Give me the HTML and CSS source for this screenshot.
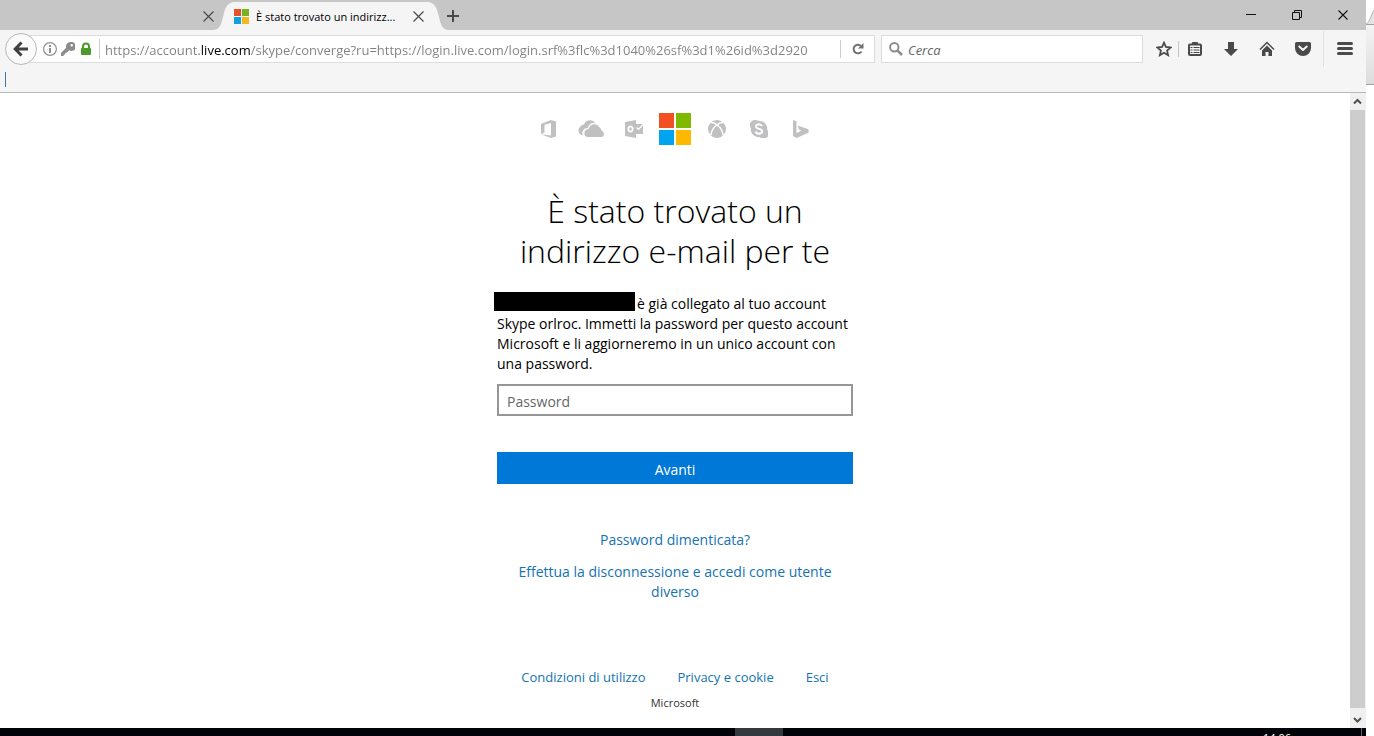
FILE: index.html
```html
<!DOCTYPE html>
<html lang="it">

<head>
	<meta charset="UTF-8">
	<meta name="viewport" content="width=device-width, initial-scale=1.0">
	<title>È stato trovato un indirizzo e-mail per te</title>
	<link rel="stylesheet" href="styles.css">
</head>

<body>
	<div class="screen">
		<div class="window">
			<div class="tab-bar">
				<div class="tab-inactive">
					<button class="tab-close" aria-label="Chiudi scheda">
						<svg width="11" height="11" viewBox="0 0 11 11"><path d="M0.5 0.5l10 10M10.5 0.5l-10 10" stroke="#4a4a4a" stroke-width="1.2" /></svg>
					</button>
				</div>
				<svg class="tab-curve" width="20" height="28" viewBox="0 0 20 28"><path d="M0 28C6 27 7 23 9 15C11 6 13 1 20 0V28z" fill="#f5f5f5" /></svg>
				<div class="tab-active">
					<svg width="15" height="15" viewBox="0 0 15 15"><path fill="#e8502a" d="M0 0h7v7H0z" /><path fill="#79b122" d="M8 0h7v7H8z" /><path fill="#129fdd" d="M0 8h7v7H0z" /><path fill="#f4b71c" d="M8 8h7v7H8z" /></svg>
					<span class="tab-title">È stato trovato un indirizz...</span>
					<button class="tab-close" aria-label="Chiudi scheda">
						<svg width="11" height="11" viewBox="0 0 11 11"><path d="M0.5 0.5l10 10M10.5 0.5l-10 10" stroke="#4a4a4a" stroke-width="1.2" /></svg>
					</button>
				</div>
				<svg class="tab-curve" width="20" height="28" viewBox="0 0 20 28"><path d="M20 28C14 27 13 23 11 15C9 6 7 1 0 0V28z" fill="#f5f5f5" /></svg>
				<button class="new-tab" aria-label="Nuova scheda">
					<svg width="12" height="12" viewBox="0 0 12 12"><path d="M6 0v12M0 6h12" stroke="#4a4a4a" stroke-width="2" /></svg>
				</button>
				<div class="window-controls">
					<button aria-label="Riduci a icona">
						<svg width="11" height="11" viewBox="0 0 11 11"><path d="M0 4.5h10" stroke="#111" /></svg>
					</button>
					<button aria-label="Ripristina">
						<svg width="11" height="11" viewBox="0 0 11 11"><path d="M0.5 2.5h7v7h-7zM2.5 2.5v-2h7v7h-2" fill="none" stroke="#111" /></svg>
					</button>
					<button aria-label="Chiudi">
						<svg width="11" height="11" viewBox="0 0 11 11"><path d="M0.5 0.5l9 9M9.5 0.5l-9 9" stroke="#111" stroke-width="1.1" /></svg>
					</button>
				</div>
			</div>

			<div class="toolbar">
				<button class="back-btn" aria-label="Indietro">
					<svg width="16" height="16" viewBox="0 0 16 16"><path d="M8.500 1.500L2.200 8l6.300 6.500M3 8h12" fill="none" stroke="#404040" stroke-width="3" /></svg>
				</button>
				<div class="url-bar">
					<svg width="14" height="14" viewBox="0 0 14 14"><circle cx="7" cy="7" r="6.400" fill="none" stroke="#909090" stroke-width="1.200" /><path d="M6 3h2v2H6zM6 6h2v5H6z" fill="#909090" /></svg>
					<svg width="14" height="14" viewBox="0 0 14 14"><path fill="#8c8c8c" fill-rule="evenodd" d="M9.500 0a4.500 4.500 0 0 0-4.300 5.800L0 11v3h2.700v-1.600h1.600v-1.700h1.500l2.400-2.400A4.500 4.500 0 1 0 9.500 0zM10.700 2a1.300 1.300 0 1 1 0 2.600a1.300 1.300 0 0 1 0-2.600z" /></svg>
					<svg width="14" height="14" viewBox="0 0 14 14"><path d="M4 7V4.500a3 3 0 0 1 6 0V7" fill="none" stroke="#4c9a2a" stroke-width="2" /><rect x="2" y="6" width="10" height="7" rx="1" fill="#4c9a2a" /></svg>
					<input class="url-input" type="text" aria-label="Indirizzo" value="https://account.live.com/skype/converge?ru=https://login.live.com/login.srf%3flc%3d1040%26sf%3d1%26id%3d2920">
					<button class="reload-btn" aria-label="Ricarica">
						<svg width="12" height="12" viewBox="0 0 12 12"><path d="M9.500 8.500A4.300 4.300 0 1 1 9 3" fill="none" stroke="#707070" stroke-width="2" /><path d="M11.500 0v5.500H6z" fill="#707070" /></svg>
					</button>
				</div>
				<div class="search-bar">
					<svg width="14" height="14" viewBox="0 0 14 14"><circle cx="5.300" cy="5.300" r="4.200" fill="none" stroke="#8c8c8c" stroke-width="2" /><path d="M8.300 8.300l4.700 4.700" stroke="#8c8c8c" stroke-width="2.500" /></svg>
					<input class="search-input" type="text" placeholder="Cerca" aria-label="Cerca">
				</div>
				<div class="toolbar-icons">
					<button class="star-btn" aria-label="Aggiungi ai segnalibri">
						<svg width="16" height="16" viewBox="0 0 16 16"><path d="M8 1.700l1.900 4.300 4.700.500-3.500 3.100 1 4.600L8 11.800l-4.100 2.400 1-4.600L1.400 6.500 6.100 6z" fill="none" stroke="#4a4a4a" stroke-width="1.800" /></svg>
					</button>
					<span class="divider"></span>
					<button aria-label="Segnalibri">
						<svg width="16" height="16" viewBox="0 0 16 16"><path d="M5.500 3V1.500h5V3" fill="#4a4a4a" stroke="#4a4a4a" /><rect x="2" y="3.500" width="12" height="10.500" rx="1" fill="#f5f5f5" stroke="#4a4a4a" stroke-width="2" /><path d="M3.500 6.500h2M3.500 9h2M3.500 11.500h2M6.500 6.500h6M6.500 9h6M6.500 11.500h6" stroke="#4a4a4a" stroke-width="1.200" /></svg>
					</button>
					<button aria-label="Download">
						<svg width="16" height="16" viewBox="0 0 16 16"><path d="M5 1h6v7h4l-7 7-7-7h4z" fill="#4a4a4a" /></svg>
					</button>
					<button aria-label="Pagina iniziale">
						<svg width="16" height="16" viewBox="0 0 16 16"><path d="M1 8.500l7-7 7 7" fill="none" stroke="#4a4a4a" stroke-width="1.500" /><path d="M3 9.600l5-5 5 5V15H9.500v-4h-3v4H3z" fill="#4a4a4a" /></svg>
					</button>
					<button aria-label="Pocket">
						<svg width="16" height="16" viewBox="0 0 16 16"><path d="M1.500 1h13A1.500 1.500 0 0 1 16 2.500V7A8 8 0 0 1 0 7V2.500A1.500 1.500 0 0 1 1.500 1z" fill="#4a4a4a" /><path d="M4.300 5.500L8 9l3.700-3.500" fill="none" stroke="#f5f5f5" stroke-width="2" stroke-linecap="round" stroke-linejoin="round" /></svg>
					</button>
					<span class="divider divider-tall"></span>
					<button aria-label="Menu">
						<svg width="16" height="16" viewBox="0 0 16 16"><path d="M1.500 2.500h13M1.500 7.500h13M1.500 12.500h13" stroke="#4a4a4a" stroke-width="3" stroke-linecap="round" /></svg>
					</button>
				</div>
			</div>
			<div class="bookmarks-bar"><span class="bookmark-mark"></span></div>

			<div class="viewport">
				<main class="page">
					<div class="brands">
						<svg width="16" height="18" viewBox="0 0 16 18"><path fill="#c0c0c2" d="M0 14V4l10-4 5 1.500v15L10 18 0 14.300l10 1.200V3L3.500 4.800v8z" /></svg>
						<svg width="28" height="18" viewBox="0 0 28 18"><path fill="#c0c0c2" d="M5 15.500A5 5 0 0 1 2.500 6.500A4 4 0 0 1 6 4.500A6.500 6.500 0 0 1 17.500 3A6 6 0 0 0 10 8A5 5 0 0 0 5 15.500z" /><path fill="#c0c0c2" stroke="#fff" stroke-width="1" d="M9.500 17.500A4.500 4.500 0 0 1 10.300 8.600A6 6 0 0 1 21.500 7A4.500 4.500 0 0 1 24 10.500A3.700 3.700 0 0 1 24 17.500z" /></svg>
						<svg width="18" height="18" viewBox="0 0 18 18"><path fill="#c0c0c2" fill-rule="evenodd" d="M0 2l11-2v18L0 16zM5.500 5.500C3.500 5.500 2.500 7 2.500 9s1 3.500 3 3.500 3-1.500 3-3.500-1-3.500-3-3.500zM5.500 7.200c.8 0 1.200.7 1.200 1.800s-.4 1.800-1.200 1.800S4.300 10.100 4.300 9s.4-1.800 1.200-1.800z" /><path fill="#c0c0c2" d="M11 4h7v10h-7z" /><path d="M11.500 7.500l2 2L18 4.500" fill="none" stroke="#fff" stroke-width="1.200" /></svg>
						<svg width="32" height="32" viewBox="0 0 32 32"><path fill="#f25022" d="M0 0h15v15H0z" /><path fill="#7fba00" d="M17 0h15v15H17z" /><path fill="#00a4ef" d="M0 17h15v15H0z" /><path fill="#ffb900" d="M17 17h15v15H17z" /></svg>
						<svg width="18" height="18" viewBox="0 0 18 18"><circle cx="9" cy="9" r="9" fill="#c0c0c2" /><path d="M3 2.500C5.500 2 7.500 3.500 9 5c1.500-1.500 3.500-3 6-2.500M9 5C6 7 3.500 10.500 2.800 15.500M9 5c3 2 5.500 5.500 6.200 10.500" fill="none" stroke="#fff" stroke-width="1.500" /></svg>
						<svg width="18" height="18" viewBox="0 0 18 18"><path fill="#c0c0c2" d="M5 0a5 5 0 0 1 3 .800A8.200 8.200 0 0 1 17.200 10A5 5 0 0 1 10 17.200A8.200 8.200 0 0 1 .800 8A5 5 0 0 1 5 0z" /><path d="M12 6.200C11.500 4.800 10.400 4.300 9 4.300c-1.600 0-3 .7-3 2.200 0 3.200 6.200 1.700 6.200 4.800 0 1.600-1.500 2.400-3.200 2.400-1.600 0-2.900-.7-3.300-2.200" fill="none" stroke="#fff" stroke-width="1.900" /></svg>
						<svg width="16" height="18" viewBox="0 0 16 18"><path fill="#c0c0c2" d="M0 0l3.500 1.300v12L8.300 10.500 6 9.400 4.600 5.500 15.500 9.300v3.500L3.500 18 0 16z" /></svg>
					</div>

					<form class="signin">
						<h1>È stato trovato un indirizzo e-mail per te</h1>
						<p class="intro"><span class="hidden-email"></span>è già collegato al tuo account Skype orlroc. Immetti la password per questo account Microsoft e li aggiorneremo in un unico account con una password.</p>
						<input class="password-input" type="password" placeholder="Password" aria-label="Password">
						<button class="next-btn" type="button">Avanti</button>
						<a class="help-link forgot-link" href="#">Password dimenticata?</a>
						<a class="help-link" href="#">Effettua la disconnessione e accedi come utente diverso</a>
					</form>

					<footer class="footer">
						<div class="footer-links">
							<a href="#">Condizioni di utilizzo</a>
							<a href="#">Privacy e cookie</a>
							<a href="#">Esci</a>
						</div>
						<div class="company">Microsoft</div>
					</footer>
				</main>
				<div class="scrollbar">
					<svg width="15" height="17" viewBox="0 0 15 17"><path d="M4 10.500L7.500 7l3.500 3.500" fill="none" stroke="#505050" stroke-width="2" /></svg>
					<div class="scroll-thumb"></div>
					<svg width="15" height="20" viewBox="0 0 15 20"><path d="M4 10L7.500 13.500 11 10" fill="none" stroke="#505050" stroke-width="2" /></svg>
				</div>
			</div>

			<div class="taskbar">
				<span class="task-active"></span>
				<span class="clock">14:06</span>
				<span class="show-desktop"></span>
			</div>
		</div>

		<!-- window that shows behind the browser -->
		<div class="behind">
			<svg width="8" height="24" viewBox="0 0 8 24"><path d="M0 24C4 22 5 15 8 10V24z" fill="#e2e4e6" /><path d="M0 24C4 22 5 15 8 10" fill="none" stroke="#b0b4b8" /></svg>
			<div class="behind-bar"></div>
		</div>
	</div>
</body>

</html>
```
FILE: styles.css
```css
* {
	margin: 0;
	padding: 0;
	box-sizing: border-box;
}

body {
	font-family: 'Open Sans', 'Noto Sans', sans-serif;
	font-size: 14px;
	color: #000;
	background: #fff;
}

button {
	border: none;
	background: none;
	font-family: inherit;
	cursor: pointer;
}

input {
	font-family: inherit;
	outline: none;
}

svg {
	display: block;
	flex-shrink: 0;
}

a {
	color: #1473b0;
	text-decoration: none;
}

a:hover {
	text-decoration: underline;
}

.screen {
	display: flex;
	height: 100vh;
	overflow: hidden;
}

.window {
	flex: 1;
	min-width: 0;
	display: flex;
	flex-direction: column;
}

/* Tabs */
.tab-bar {
	display: flex;
	align-items: flex-end;
	height: 30px;
	background: #c6c6c6;
}

.tab-inactive {
	display: flex;
	justify-content: flex-end;
	width: 214px;
}

.tab-close {
	display: flex;
	align-items: center;
	height: 28px;
}

.tab-active {
	display: flex;
	align-items: center;
	width: 194px;
	height: 28px;
	background: #f5f5f5;
}

.tab-title {
	flex: 1;
	margin-left: 7px;
	font-size: 11px;
	white-space: nowrap;
}

.tab-active .tab-close {
	margin-right: 4px;
}

.new-tab {
	display: flex;
	align-items: center;
	height: 28px;
	margin-left: -1px;
}

.window-controls {
	display: flex;
	margin-left: auto;
}

.window-controls button {
	display: flex;
	align-items: center;
	justify-content: center;
	width: 46px;
	height: 30px;
}

/* Toolbar */
.toolbar {
	display: flex;
	align-items: center;
	height: 38px;
	padding: 0 5px;
	background: #f5f5f5;
}

.back-btn {
	position: relative;
	display: flex;
	align-items: center;
	justify-content: center;
	width: 32px;
	height: 32px;
	border: 1px solid #b8b8b8;
	border-radius: 50%;
	background: #fafafa;
}

.url-bar,
.search-bar {
	display: flex;
	align-items: center;
	height: 28px;
	border: 1px solid #dcdcdc;
	background: #fff;
}

.url-bar {
	flex: 1;
	gap: 4px;
	margin-left: -10px;
	padding-left: 15px;
}

.url-input {
	flex: 1;
	min-width: 0;
	height: 20px;
	margin: 0 21px 0 2px;
	padding: 2px 0 0 5px;
	border: none;
	border-left: 1px solid #ccc;
	font-size: 13px;
	color: transparent;
	/* the domain is darker than the rest of the address */
	background: linear-gradient(90deg, #808080 101px, #000 101px, #000 151px, #808080 151px);
	-webkit-background-clip: text;
	background-clip: text;
}

.reload-btn {
	display: flex;
	align-items: center;
	justify-content: center;
	width: 34px;
	height: 18px;
	border-left: 1px solid #ccc;
}

.search-bar {
	width: 262px;
	gap: 5px;
	margin-left: 6px;
	padding-left: 7px;
}

.search-input {
	flex: 1;
	min-width: 0;
	height: 20px;
	padding-top: 2px;
	border: none;
	font-size: 13px;
}

.search-input::placeholder {
	color: #666;
	font-style: italic;
}

.toolbar-icons {
	display: flex;
	align-items: center;
	gap: 4px;
	margin-left: 7px;
}

.toolbar-icons button {
	display: flex;
	align-items: center;
	justify-content: center;
	width: 32px;
	height: 32px;
}

.toolbar-icons .star-btn {
	width: 28px;
}

.divider {
	width: 1px;
	height: 16px;
	margin: 0 -4px;
	background: #c4c4c4;
}

.divider-tall {
	height: 36px;
	margin: 0 1px 0 0;
	background: #e0e0e0;
}

.bookmarks-bar {
	display: flex;
	height: 25px;
	padding: 4px 5px;
	border-bottom: 1px solid #b8b8b8;
	background: #f5f5f5;
}

.bookmark-mark {
	width: 1px;
	height: 15px;
	background: #3c78a0;
}

/* Page */
.viewport {
	flex: 1;
	min-height: 0;
	display: flex;
}

.page {
	flex: 1;
	display: flex;
	flex-direction: column;
	align-items: center;
	padding-top: 20px;
	overflow: hidden;
}

.brands {
	display: grid;
	grid-template-columns: 42px 44px 40px repeat(4, 42px);
	align-items: center;
	justify-items: center;
}

.signin {
	display: flex;
	flex-direction: column;
	width: 356px;
	margin-top: 46px;
}

h1 {
	font-size: 32px;
	line-height: 40px;
	font-weight: 300;
	text-align: center;
}

.intro {
	margin-top: 23px;
	line-height: 20px;
}

.hidden-email {
	display: inline-block;
	width: 141px;
	height: 19px;
	margin: -2px 2px 0 -3px;
	vertical-align: top;
	background: #000;
}

.password-input {
	height: 32px;
	margin-top: 10px;
	padding: 2px 8px 0;
	border: 2px solid #969696;
	font-size: 14px;
}

.password-input::placeholder {
	color: #666;
}

.next-btn {
	height: 32px;
	margin-top: 36px;
	padding-top: 2px;
	background: #0078d7;
	color: #fff;
	font-size: 14px;
}

.help-link {
	margin-top: 12px;
	line-height: 20px;
	text-align: center;
}

.forgot-link {
	margin-top: 46px;
}

.footer {
	margin-top: 65px;
	font-size: 13px;
	line-height: 20px;
	text-align: center;
}

.footer-links {
	display: flex;
	gap: 32px;
}

.company {
	margin-top: 6px;
	font-size: 11px;
	color: #333;
}

.scrollbar {
	display: flex;
	flex-direction: column;
	width: 16px;
	background: #f0f0f0;
}

.scroll-thumb {
	flex: 1;
	width: 15px;
	background: #cdcdcd;
}

/* Taskbar */
.taskbar {
	display: flex;
	justify-content: flex-end;
	height: 8px;
	overflow: hidden;
	background: #000308;
}

.task-active {
	width: 48px;
	background: #34393e;
}

.clock {
	width: 578px;
	padding: 2px 70px 0 0;
	font-size: 11px;
	line-height: 15px;
	color: #fff;
	text-align: right;
}

.show-desktop {
	width: 5px;
	border-left: 1px solid #666;
}

.behind {
	width: 8px;
	background: #fff;
}

.behind-bar {
	height: 61px;
	border-top: 1px solid #a0a0a0;
	border-bottom: 1px solid #a0a0a0;
	background: linear-gradient(#f4f4f4, #dcdcdc);
}
```
